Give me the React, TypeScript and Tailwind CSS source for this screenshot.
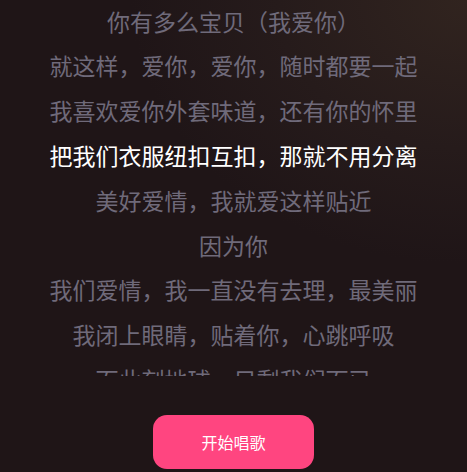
import React from "react";

const lines = [
  { t: "你有多么宝贝（我爱你）", active: false },
  { t: "就这样，爱你，爱你，随时都要一起", active: false },
  { t: "我喜欢爱你外套味道，还有你的怀里", active: false },
  { t: "把我们衣服纽扣互扣，那就不用分离", active: true },
  { t: "美好爱情，我就爱这样贴近", active: false },
  { t: "因为你", active: false },
  { t: "我们爱情，我一直没有去理，最美丽", active: false },
  { t: "我闭上眼睛，贴着你，心跳呼吸", active: false },
  { t: "而此刻地球，只剩我们而已", active: false },
];

export default function App() {
  return (
    <div
      className="w-[467px] h-[472px] overflow-hidden flex flex-col bg-[radial-gradient(ellipse_90%_70%_at_100%_0%,#31241f_0%,#261b1b_45%,#1f1517_80%)]"
      style={{ fontFamily: '"Noto Sans CJK SC", "Noto Sans", sans-serif' }}
    >
      <div className="h-[376px] overflow-hidden flex flex-col">
        <div className="mt-[-1.5px] flex flex-col">
          {lines.map((l, i) => (
            <div
              key={i}
              className={`h-[44.8px] shrink-0 flex items-center justify-center text-[23px] whitespace-nowrap ${
                l.active ? "text-white" : "text-[#6f6a7a]"
              }`}
            >
              {l.t}
            </div>
          ))}
        </div>
      </div>
      <div className="flex justify-center pt-[39px]">
        <button className="w-[161px] h-[54px] rounded-[14px] bg-[#ff4580] text-white text-[16px] flex items-center justify-center">
          开始唱歌
        </button>
      </div>
    </div>
  );
}
